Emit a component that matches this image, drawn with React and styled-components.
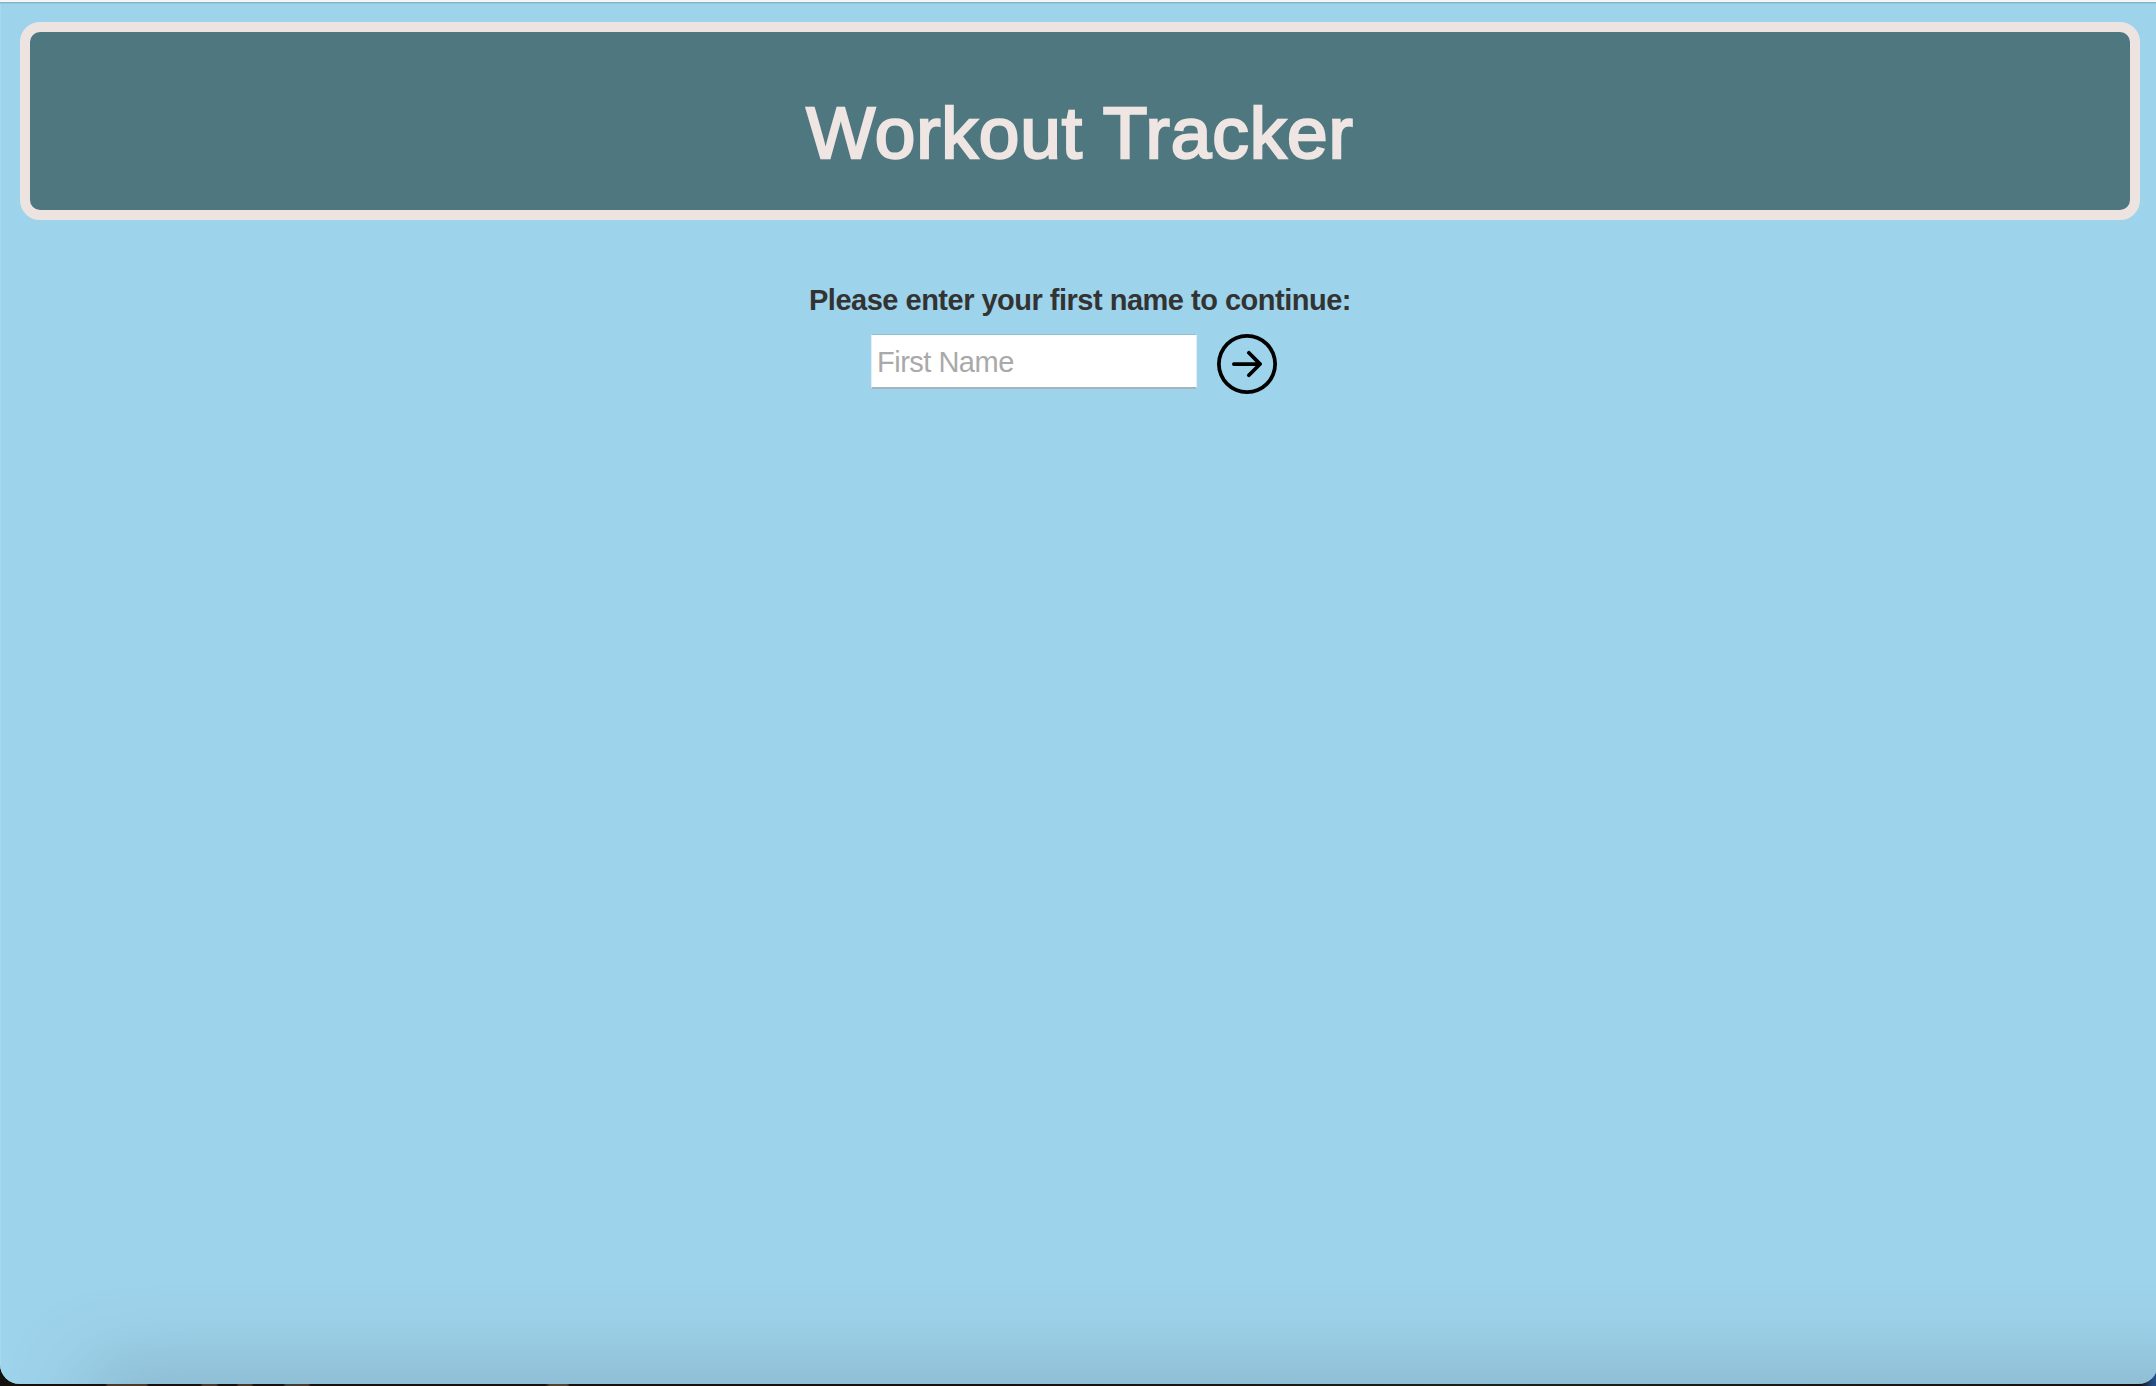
import React from "react";
import styled, { createGlobalStyle } from "styled-components";
import { BsArrowRightCircle } from "react-icons/bs";

const GlobalStyle = createGlobalStyle`
  *, *::before, *::after { box-sizing: border-box; }
  html { background: #15110f; }
  body {
    margin: 0;
    overflow: hidden;
    font-family: "Liberation Sans", Arial, sans-serif;
    color: #333;
  }
`;

const Desktop = styled.div`
  height: 1386px;
  overflow: hidden;
  background: linear-gradient(
    to right, #15110f 0, #15110f 105px, #4a3a2b 108px, #4a3a2b 146px, #15110f 149px,
    #15110f 200px, #46382c 203px, #46382c 216px, #15110f 219px, #15110f 236px,
    #46382c 239px, #46382c 251px, #15110f 254px, #15110f 283px, #39413a 286px,
    #4a3a2b 308px, #15110f 311px, #15110f 545px, #4f4334 550px, #4f4334 567px,
    #15110f 570px, #15110f 1000px, #1c2119 1500px, #15110f 2140px, #244e88 2153px
  );
`;

const Page = styled.main`
  position: relative;
  width: 2158px;
  height: 1384px;
  padding: 18px 18px 0 20px;
  display: flex;
  flex-direction: column;
  align-items: center;
  background: #9dd3eb;
  border-top: 2px solid #f4f6f6;
  border-radius: 0 0 20px 20px;
  box-shadow: inset 0 1px 0 #83b4c8, inset 0 2px 0 #93c6dc, inset 1px 0 0 #a8d9ec;
  overflow: hidden;

  &::after {
    content: "";
    position: absolute;
    left: 100px;
    right: -100px;
    bottom: -40px;
    height: 40px;
    box-shadow: 0 0 80px 10px rgba(98, 122, 138, 0.43);
    pointer-events: none;
  }
`;

const Header = styled.header`
  width: 2120px;
  height: 198px;
  margin-top: 2px;
  flex: none;
  display: flex;
  justify-content: center;
  padding-top: 59px;
  border: 10px solid #ede4e2;
  border-radius: 20px;
  background: #4f7780;
`;

const Title = styled.h1`
  margin: 0;
  font-size: 73px;
  line-height: 83px;
  font-weight: 400;
  letter-spacing: 0.9px;
  color: #efe6e3;
  -webkit-text-stroke: 2.4px #efe6e3;
  white-space: nowrap;
`;

const NameForm = styled.form`
  display: flex;
  flex-direction: column;
  align-items: center;
  margin-top: 62px;
`;

const Label = styled.label`
  font-size: 29px;
  line-height: 36px;
  font-weight: 700;
  letter-spacing: -0.5px;
  color: #333;
  white-space: nowrap;
`;

const Row = styled.div`
  display: flex;
  gap: 20px;
  margin-top: 16px;
  padding-right: 12px;
`;

const NameInput = styled.input`
  width: 326px;
  height: 55px;
  margin: 0;
  padding: 3px 5px 0;
  border: 1px solid #e4edf1;
  border-top-color: #90bfd2;
  border-bottom: 2px solid #a3b5bd;
  border-radius: 0;
  outline: none;
  background: #fff;
  font-family: inherit;
  font-size: 29px;
  letter-spacing: -0.5px;

  &::placeholder { color: #a9a9a9; opacity: 1; }
`;

const SubmitButton = styled.button`
  display: flex;
  padding: 0;
  border: 0;
  background: none;
  color: #000;
`;

export default function App() {
  return (
    <Desktop>
      <GlobalStyle />
      <Page>
        <Header>
          <Title>Workout Tracker</Title>
        </Header>
        <NameForm onSubmit={(event) => event.preventDefault()}>
          <Label htmlFor="first-name">Please enter your first name to continue:</Label>
          <Row>
            <NameInput id="first-name" type="text" placeholder="First Name" />
            <SubmitButton type="submit" aria-label="Continue">
              <BsArrowRightCircle size={60} />
            </SubmitButton>
          </Row>
        </NameForm>
      </Page>
    </Desktop>
  );
}
